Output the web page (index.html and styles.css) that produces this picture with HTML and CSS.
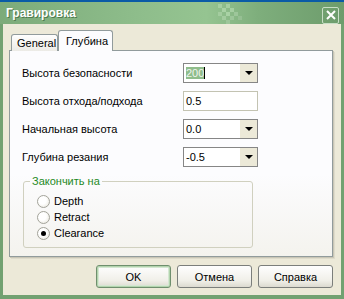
FILE: index.html
```html
<!DOCTYPE html>
<html>

<head>
   <meta name="viewport" content="width=device-width, initial-scale=1.0">
   <title>Гравировка</title>
   <link rel="stylesheet" href="styles.css">
</head>

<body>
   <div class="desktop"></div>
   <div class="window">
      <div class="titlebar">
         <span class="title">Гравировка</span>
         <svg class="checker" width="30" height="22" viewBox="0 0 30 22">
            <rect x="0" y="2" width="4" height="4" fill="#a6cfa2" />
            <rect x="8" y="2" width="4" height="4" fill="#a6cfa2" />
            <rect x="4" y="6" width="4" height="4" fill="#a9d2a5" />
            <rect x="12" y="6" width="4" height="4" fill="#a6cfa2" />
            <rect x="0" y="10" width="4" height="4" fill="#a3cc9f" />
            <rect x="8" y="10" width="4" height="4" fill="#a9d2a5" />
            <rect x="16" y="10" width="4" height="4" fill="#9dc69a" />
            <rect x="4" y="14" width="4" height="4" fill="#a3cc9f" />
            <rect x="12" y="14" width="4" height="4" fill="#9dc69a" />
            <rect x="20" y="14" width="4" height="4" fill="#96bf93" />
            <rect x="8" y="18" width="4" height="4" fill="#9dc69a" />
         </svg>
         <span class="close">
            <svg width="14" height="14" viewBox="0 0 14 14">
               <path d="M3 3 L11 11 M11 3 L3 11" stroke="#ffffff" stroke-width="2" />
            </svg>
         </span>
      </div>

      <div class="content">
         <div class="tabs">
            <div class="tab">General</div>
            <div class="tab active">Глубина</div>
         </div>

         <div class="panel">
            <div class="row">
               <label>Высота безопасности</label>
               <div class="field combo">
                  <span class="value"><span class="sel">200</span><span class="caret"></span></span>
                  <span class="drop"><span class="arrow"></span></span>
               </div>
            </div>
            <div class="row">
               <label>Высота отхода/подхода</label>
               <div class="field edit"><span class="value">0.5</span></div>
            </div>
            <div class="row">
               <label>Начальная высота</label>
               <div class="field combo">
                  <span class="value">0.0</span>
                  <span class="drop"><span class="arrow"></span></span>
               </div>
            </div>
            <div class="row">
               <label>Глубина резания</label>
               <div class="field combo">
                  <span class="value">-0.5</span>
                  <span class="drop"><span class="arrow"></span></span>
               </div>
            </div>

            <fieldset class="group">
               <legend>Закончить на</legend>
               <div class="radio"><span class="dot"></span>Depth</div>
               <div class="radio"><span class="dot"></span>Retract</div>
               <div class="radio checked"><span class="dot"></span>Clearance</div>
            </fieldset>
         </div>

         <div class="buttons">
            <button class="btn default">OK</button>
            <button class="btn">Отмена</button>
            <button class="btn">Справка</button>
         </div>
      </div>
   </div>
</body>

</html>
```

FILE: styles.css
```css
html,
body {
   margin: 0;
   padding: 0;
}

body {
   width: 344px;
   height: 299px;
   overflow: hidden;
   background: #0c5da5;
   font-family: "Liberation Sans", Arial, sans-serif;
   font-size: 11px;
   color: #000000;
}

.desktop {
   height: 2px;
   background: #0a5ba6;
}

.window {
   height: 297px;
   box-sizing: border-box;
   background: #ece9d8;
   border-left: 3px solid #72a171;
   border-right: 3px solid #72a171;
   border-bottom: 4px solid #72a171;
   display: flex;
   flex-direction: column;
}

.titlebar {
   height: 22px;
   margin: 0 -3px;
   padding: 0 5px 0 6px;
   display: flex;
   align-items: center;
   background: linear-gradient(to right, #7cab7a 0%, #8ebd8b 40%, #95c491 60%, #7eae7c 75%, #6d9c6c 100%);
}

.title {
   color: #ffffff;
   font-weight: bold;
   font-size: 12px;
   text-shadow: 1px 1px 0 #4f7a4e;
   flex: 1;
}

.checker {
   margin-right: 74px;
}

.close {
   width: 15px;
   height: 15px;
   border: 1px solid #c9dec7;
   border-radius: 2px;
   display: flex;
   align-items: center;
   justify-content: center;
   margin-top: 4px;
   margin-right: 0;
}

.content {
   flex: 1;
   padding: 7px 8px 0 6px;
}

.tabs {
   display: flex;
   align-items: flex-end;
   height: 20px;
   padding-left: 2px;
   margin-bottom: -1px;
   position: relative;
   z-index: 1;
}

.tab {
   height: 17px;
   box-sizing: border-box;
   padding: 0 5px;
   border: 1px solid #919b9c;
   border-bottom: none;
   border-radius: 3px 3px 0 0;
   background: linear-gradient(#fefefe, #ecebe6);
   display: flex;
   align-items: center;
   width: 47px;
}

.tab.active {
   height: 21px;
   width: 55px;
   margin-left: 0;
   padding-left: 7px;
   background: #fcfcfe;
}

.panel {
   height: 207px;
   box-sizing: border-box;
   border: 1px solid #919b9c;
   background: linear-gradient(#fcfcfe 60%, #f4f3ee);
   box-shadow: 1px 1px 0 #c9c6b6, 2px 2px 0 #dedbcb;
   padding: 12px 0 0 12px;
}

.row {
   display: flex;
   align-items: center;
   height: 20px;
   margin-bottom: 8px;
}

.row label {
   width: 161px;
}

.row:nth-child(2) {
   margin-bottom: 8px;
}

.field {
   width: 75px;
   height: 20px;
   box-sizing: border-box;
   background: #ffffff;
   display: flex;
   align-items: center;
}

.combo {
   border: 1px solid #868686;
}

.edit {
   border: 1px solid #c3c3b2;
}

.value {
   flex: 1;
   padding-left: 2px;
   display: flex;
   align-items: center;
}

.sel {
   background: #8fbd8b;
   color: #f0f4ee;
   line-height: 12px;
}

.caret {
   width: 1px;
   height: 12px;
   background: #000000;
}

.drop {
   width: 17px;
   height: 18px;
   background: #ece9d8;
   display: flex;
   align-items: center;
   justify-content: center;
}

.arrow {
   width: 0;
   height: 0;
   border-left: 4px solid transparent;
   border-right: 4px solid transparent;
   border-top: 4px solid #000000;
}

.group {
   width: 230px;
   box-sizing: border-box;
   margin: 6px 0 0 1px;
   padding: 5px 6px 6px 6px;
   border: 1px solid #d0d0bf;
   border-radius: 3px;
}

.group legend {
   padding: 0 2px;
   color: #1f8a1f;
   line-height: 13px;
}

.radio {
   height: 16px;
   display: flex;
   align-items: center;
   padding-left: 7px;
}

.dot {
   width: 13px;
   height: 13px;
   box-sizing: border-box;
   border: 1px solid #a3a39a;
   border-radius: 50%;
   background: radial-gradient(circle at 40% 40%, #ffffff 40%, #e4e2d6);
   margin-right: 4px;
   display: flex;
   align-items: center;
   justify-content: center;
}

.checked .dot::after {
   content: "";
   width: 5px;
   height: 5px;
   border-radius: 50%;
   background: #000000;
}

.buttons {
   display: flex;
   justify-content: flex-end;
   gap: 6px;
   margin-top: 8px;
   padding-right: 0;
}

.btn {
   width: 75px;
   height: 23px;
   font-family: "Liberation Sans", Arial, sans-serif;
   font-size: 11px;
   color: #000000;
   border: 1px solid #7b7e7b;
   border-radius: 3px;
   background: linear-gradient(#fefefe, #f0efe8 70%, #dcdad0);
   padding: 0;
}

.btn.default {
   border-color: #6f8f6e;
   box-shadow: inset 0 0 0 1px #b2d4ad, inset 0 0 0 2px #d5e7d2;
}
```
